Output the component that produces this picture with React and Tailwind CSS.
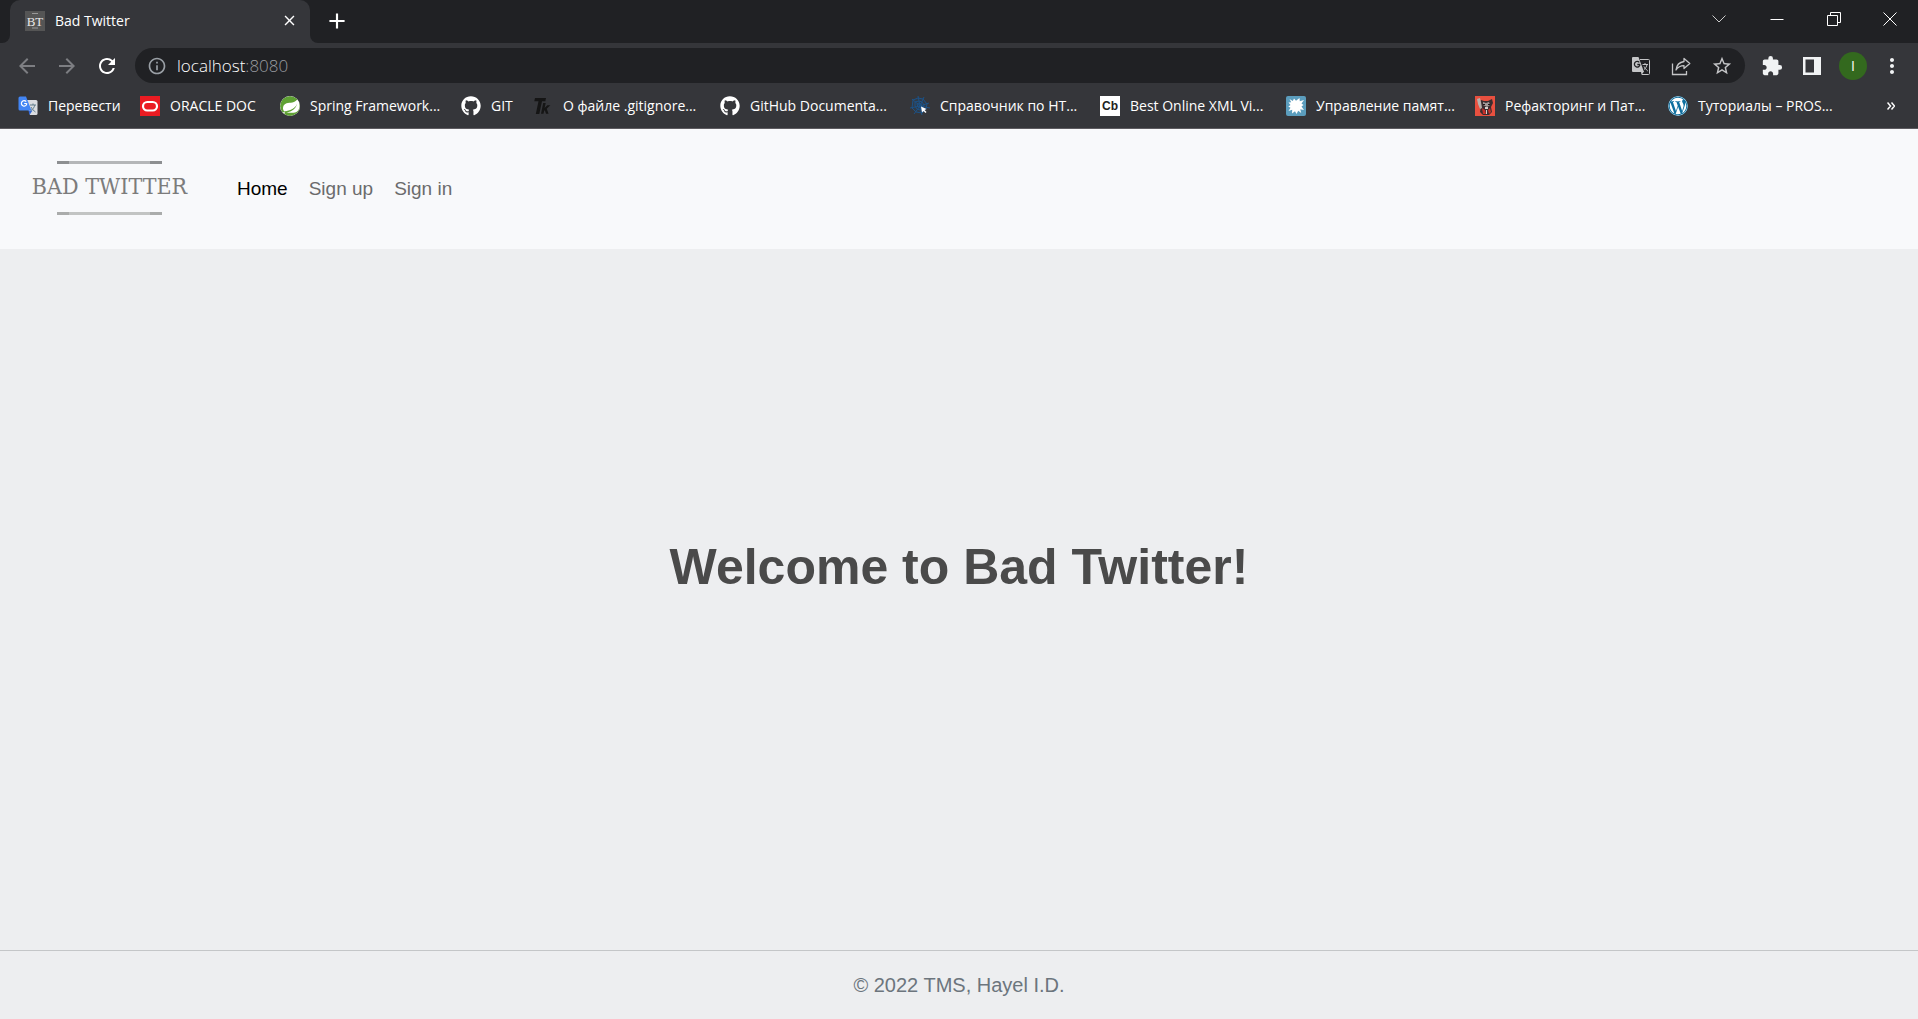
import React from "react";
import {
  MdAdd,
  MdArrowBack,
  MdArrowForward,
  MdClose,
  MdExtension,
  MdInfoOutline,
  MdMoreVert,
  MdRefresh,
  MdStarBorder,
} from "react-icons/md";
import { FaGithub, FaWordpress } from "react-icons/fa";
import { SiSpring } from "react-icons/si";

function TranslateIcon() {
  return (
    <svg viewBox="0 0 20 20" className="size-5">
      <path d="M8 4h10a1.500 1.500 0 0 1 1.500 1.500v12A1.500 1.500 0 0 1 18 19h-6z" fill="#dadce0" />
      <path d="M10.500 14.500h4L11.500 19z" fill="#3367d6" />
      <path d="M2 .5h6l5.500 14H2A1.500 1.500 0 0 1 .5 13V2A1.500 1.500 0 0 1 2 .5z" fill="#4285f4" />
      <path d="M8.800 7.500H6.200M8.200 5.700a2.700 2.700 0 1 0 .6 1.800" stroke="#fff" strokeWidth="1.200" fill="none" />
      <path d="M12 9h6M15 7.500V9m1.800 0c-.5 2.500-2 4.500-4 5.500m.2-3.500c1 2 2.500 3.500 4.500 5" stroke="#607d8b" strokeWidth="1" fill="none" />
    </svg>
  );
}

function OracleIcon() {
  return (
    <svg viewBox="0 0 20 20" className="size-5">
      <rect width="20" height="20" fill="#ea1b22" />
      <rect x="3" y="6" width="14" height="8.500" rx="4.250" fill="none" stroke="#fff" strokeWidth="2.200" />
    </svg>
  );
}

function SpringIcon() {
  return <SiSpring className="size-5 rounded-full bg-white text-[#5fa134]" />;
}

function GithubIcon() {
  return <FaGithub className="size-5 text-white" />;
}

function TkIcon() {
  return (
    <svg viewBox="0 0 20 20" className="size-5">
      <path d="M2 2h11l-.7 3.300H9L6.300 18H2.800L5.500 5.300H1.300z" fill="#151515" />
      <path d="M10.200 7h2.500l-1.100 5 2.700-2.800h3l-3.600 3.500 1.900 5h-2.600l-1.200-3.500-.7.700-.6 2.800H8z" fill="#151515" />
    </svg>
  );
}

function WebIcon() {
  return (
    <svg viewBox="0 0 20 20" className="size-5">
      <g stroke="#1c5287" fill="none" strokeWidth="1">
        <path d="M8 0l2 10 4-9M10 10l9-3M10 10l10 2M10 10l2 9M10 10L4 18M10 10L0 12M10 10L2 3" />
        <path d="M3 4l5-2 5 1 4 5-1 5-4 4-6-1-4-4z" fill="#1c4f8033" />
        <path d="M5 6l4-1 3 1 2 3-1 3-3 2-3-1-2-3zM7 8l2-1 2 1 1 2-2 2-2-1z" />
      </g>
      <path d="M11 10.500l5.500 2.500-2 1 2 2-1 1-2-2-1.500 1.500z" fill="#fff" />
    </svg>
  );
}

function CbIcon() {
  return (
    <span className="flex size-5 items-center justify-center bg-white font-['Liberation_Sans'] text-xs font-bold leading-none text-[#222]">
      Cb
    </span>
  );
}

function SplashIcon() {
  return (
    <svg viewBox="0 0 20 20" className="size-5">
      <rect width="20" height="20" rx="2" fill="#5b9dbd" />
      <path
        d="M3.500 3l3.300 2L8 2.500l2 2.300L13.500 2l.3 3.200L18 4l-2.500 3.500 2 1.500-2 1.500L18 14l-3.700-.8.9 3.800-3-2.200L10.500 18 9 15.200l-3 2.300.2-3.700L2.500 15l2-3.200L2.300 10.500 4.500 9 2.500 6.500l2.700-.3z"
        fill="#fff"
      />
    </svg>
  );
}

function RaccoonIcon() {
  return (
    <svg viewBox="0 0 20 20" className="size-5">
      <rect width="20" height="20" fill="#e8503f" />
      <path d="M6 4l3 1h4l4-2 1 4-2 4 1 5-3 3H8l-3-3 1-6-2-2z" fill="#3a2e30" />
      <path d="M2 3l3-1 1 4 1 6-2 1-2-5z" fill="#b8b0ac" />
      <path d="M8 6l3 1 3-1 1 3-3 2-4-2z" fill="#a39a98" />
      <path d="M8 8h2v1H8zM13 8h2v1h-2z" fill="#1f1618" />
      <path d="M7 12l3 2 1 4H8zM15 12l1 4-2 2-1-4z" fill="#c62f2a" />
      <path d="M10 11h3v2h-3zM11 14h1v4h-1z" fill="#d8d0cc" />
    </svg>
  );
}

function WordpressIcon() {
  return (
    <span className="flex size-5 items-center justify-center rounded-full bg-[#0f6f9f]">
      <FaWordpress className="size-5 rotate-0 text-white [clip-path:circle(50%)]" />
    </span>
  );
}

const bookmarks = [
  { label: "Перевести", Icon: TranslateIcon, width: "w-[122px]" },
  { label: "ORACLE DOC", Icon: OracleIcon, width: "w-[140px]" },
  { label: "Spring Framework...", Icon: SpringIcon, width: "w-[181px]" },
  { label: "GIT", Icon: GithubIcon, width: "w-[72px]" },
  { label: "О файле .gitignore...", Icon: TkIcon, width: "w-[187px]" },
  { label: "GitHub Documenta...", Icon: GithubIcon, width: "w-[190px]" },
  { label: "Справочник по HT...", Icon: WebIcon, width: "w-[190px]" },
  { label: "Best Online XML Vi...", Icon: CbIcon, width: "w-[186px]" },
  { label: "Управление памят...", Icon: SplashIcon, width: "w-[189px]" },
  { label: "Рефакторинг и Пат...", Icon: RaccoonIcon, width: "w-[193px]" },
  { label: "Туториалы – PROS...", Icon: WordpressIcon, width: "w-[190px]" },
];

function TabStrip() {
  return (
    <div className="flex h-[43px] bg-[#202124]">
      <div className="flex w-2.5 items-end bg-[#35363a]">
        <div className="h-full w-full rounded-br-lg bg-[#202124]" />
      </div>
      <div className="bg-[#202124]">
        <div className="flex h-full w-[300px] items-center rounded-t-[10px] bg-[#35363a] pr-3 pb-0.5 pl-[15px]">
          <svg viewBox="0 0 20 20" className="size-5" aria-hidden="true">
            <rect width="20" height="20" fill="#555" />
            <path d="M7 2.500h6M7 17h6" stroke="#999" />
            <text x="10" y="14.500" textAnchor="middle" fontFamily="Liberation Serif, serif" fontSize="13" fill="#e8e8e8">
              BT
            </text>
          </svg>
          <span className="ml-2.5 flex-1 text-sm text-white">Bad Twitter</span>
          <button aria-label="Close tab" className="text-white">
            <MdClose className="size-[17px]" />
          </button>
        </div>
      </div>
      <div className="w-2.5 bg-[#35363a]">
        <div className="h-full w-full rounded-bl-lg bg-[#202124]" />
      </div>
      <button aria-label="New tab" className="ml-1 pb-0.5 text-white">
        <MdAdd className="size-[26px]" />
      </button>
      <div className="ml-auto flex text-white">
        <button aria-label="Search tabs" className="flex w-[58px] items-center justify-center pb-1.5">
          <svg viewBox="0 0 14 8" className="w-3.5" fill="none" stroke="#ccc">
            <path d="M.5.5L7 7 13.500.5" />
          </svg>
        </button>
        <button aria-label="Minimize" className="flex w-[57px] items-center justify-center pb-1.5">
          <svg viewBox="0 0 14 14" className="w-3.5" stroke="#fff">
            <path d="M.5 7.500h13" />
          </svg>
        </button>
        <button aria-label="Restore" className="flex w-[57px] items-center justify-center pb-1.5">
          <svg viewBox="0 0 14 14" className="w-3.5" fill="none" stroke="#fff">
            <path d="M.5 3.500h10v10H.5zM3.500 3V.5h10v10H11" />
          </svg>
        </button>
        <button aria-label="Close window" className="flex w-[56px] items-center justify-center pb-1.5">
          <svg viewBox="0 0 14 14" className="w-3.5" stroke="#fff">
            <path d="M.5.5l13 13M13.500.5l-13 13" />
          </svg>
        </button>
      </div>
    </div>
  );
}

function Toolbar() {
  return (
    <div className="flex h-[45px] items-center pr-3.5 pl-[15px]">
      <button aria-label="Back" className="text-[#7d7e82]">
        <MdArrowBack className="size-6" />
      </button>
      <button aria-label="Forward" className="ml-4 text-[#7d7e82]">
        <MdArrowForward className="size-6" />
      </button>
      <button aria-label="Reload" className="ml-4 text-white">
        <MdRefresh className="size-6" />
      </button>
      <div className="ml-4 flex h-[35px] flex-1 items-center rounded-full bg-[#202124] pr-3 pl-3">
        <MdInfoOutline className="size-5 text-[#9aa0a6]" />
        <div className="ml-2.5 flex-1 text-[17px] font-light text-white">
          localhost<span className="text-[#9a9ca0]">:8080</span>
        </div>
        <div className="flex items-center gap-5 text-[#c4c5c7]">
          <button aria-label="Translate this page">
            <svg viewBox="0 0 20 20" className="size-5">
              <path d="M9 3.500h8.500a1 1 0 0 1 1 1v13a1 1 0 0 1-1 1H11" fill="none" stroke="currentColor" />
              <path d="M2 1h5.500l5.500 15H2a1 1 0 0 1-1-1V2a1 1 0 0 1 1-1z" fill="currentColor" />
              <path d="M10 15.500h3L10.500 19z" fill="currentColor" />
              <path d="M9 8.500H6.300M8.300 6.400a2.800 2.800 0 1 0 .7 2.100" fill="none" stroke="#202124" strokeWidth="1.300" />
              <path d="M11.500 8.500H17M14 7v1.500m2 0c-.3 2-1.500 4-3 5m0-3c1 1.700 2 3 3.800 4.500" fill="none" stroke="currentColor" />
            </svg>
          </button>
          <button aria-label="Share">
            <svg viewBox="0 0 20 20" className="size-5" fill="none" stroke="currentColor" strokeWidth="1.300">
              <path d="M1.500 7.500v11h14V15" />
              <path d="M13 2.500L18.800 7.500 13 12.500V9.700c-3.500 0-6 1.200-8 4.300.5-4.500 3.500-7.800 8-8.500z" strokeLinejoin="round" />
            </svg>
          </button>
          <button aria-label="Bookmark this page">
            <MdStarBorder className="size-[22px]" />
          </button>
        </div>
      </div>
      <div className="ml-4 flex items-center text-[#f1f3f4]">
        <button aria-label="Extensions">
          <MdExtension className="size-[22px]" />
        </button>
        <button aria-label="Side panel" className="ml-5">
          <svg viewBox="0 0 18 18" className="size-[18px]">
            <path d="M1.250 1.250h15.500v15.500H1.250z" fill="none" stroke="currentColor" strokeWidth="2.500" />
            <path d="M11 1h6v16h-6z" fill="currentColor" />
          </svg>
        </button>
        <button className="ml-[18px] flex size-7 items-center justify-center rounded-full bg-[#33691e] text-sm text-white">
          I
        </button>
        <button aria-label="Menu" className="ml-[13px]">
          <MdMoreVert className="size-6" />
        </button>
      </div>
    </div>
  );
}

function BookmarksBar() {
  return (
    <div className="flex h-[41px] items-center border-b border-[#5d5b60] pr-[23px] pb-1 pl-[18px] text-sm text-white">
      {bookmarks.map(({ label, Icon, width }) => (
        <a key={label} href="#" className={"flex shrink-0 items-center gap-2.5 whitespace-nowrap " + width}>
          <Icon />
          {label}
        </a>
      ))}
      <button aria-label="More bookmarks" className="ml-auto">
        <svg viewBox="0 0 8 8" className="w-2" fill="none" stroke="#fff" strokeWidth="1.500">
          <path d="M.5.5L3.500 4 .5 7.500M4.500.5l3 3.500-3 3.500" />
        </svg>
      </button>
    </div>
  );
}

function Logo() {
  return (
    <a href="#" className="flex w-[153px] flex-col items-center pb-[3px]">
      <span className="h-[3px] w-[105px] border-x-[12px] border-[#8d8f91] bg-[#b4b6b8]" />
      <span className="mt-2 mb-3 font-['DejaVu_Serif_Condensed','Liberation_Serif',serif] text-[23px] leading-7 whitespace-nowrap text-[#7c7c7c]">
        BAD TWITTER
      </span>
      <span className="h-[3px] w-[105px] border-x-[12px] border-[#aaacab] bg-[#c2c4c3]" />
    </a>
  );
}

export default function App() {
  return (
    <div className="flex min-h-screen flex-col bg-[#edeef0] font-['Liberation_Sans',sans-serif]">
      <div className="bg-[#35363a] font-['Open_Sans','Noto_Sans',sans-serif]">
        <TabStrip />
        <Toolbar />
        <BookmarksBar />
      </div>
      <header className="flex h-[120px] items-center bg-[#f8f9fb] pl-[33px]">
        <Logo />
        <nav className="ml-[51px] flex gap-[21px] text-[19px] text-[#6b6b6c]">
          <a href="#" className="text-black">Home</a>
          <a href="#">Sign up</a>
          <a href="#">Sign in</a>
        </nav>
      </header>
      <main className="flex flex-1 items-center justify-center pb-16">
        <h1 className="text-[50px] font-bold text-[#4a4a4a]">Welcome to Bad Twitter!</h1>
      </main>
      <footer className="flex h-[69px] items-center justify-center border-t border-[#c4c6c8] text-xl text-[#6c757d]">
        © 2022 TMS, Hayel I.D.
      </footer>
    </div>
  );
}
